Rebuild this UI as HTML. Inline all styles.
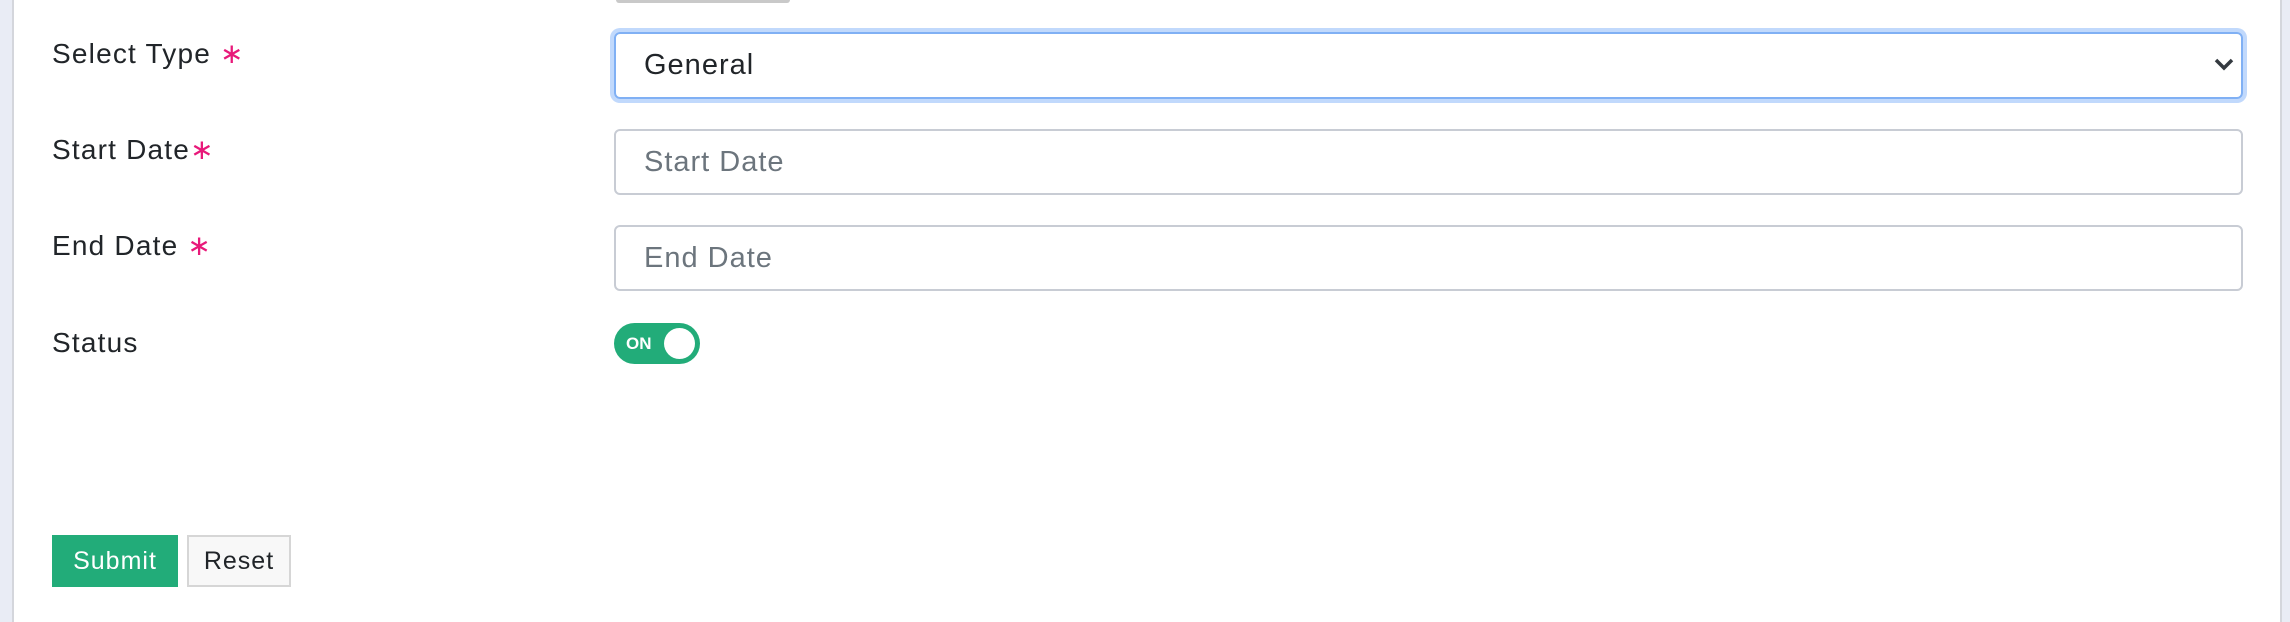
<!DOCTYPE html>
<html><head><meta charset="utf-8"><style>
*{box-sizing:border-box;margin:0;padding:0}
body{width:2290px;height:622px;background:#fff;position:relative;overflow:hidden;font-family:"Liberation Sans",sans-serif;color:#212529}
.lb{position:absolute;left:0;top:0;width:14px;height:622px;background:#e9ecf5;border-right:2px solid #d4d6dc}
.rb{position:absolute;right:0;top:0;width:10px;height:622px;background:#e9ecf5;border-left:2px solid #d4d6dc}
.lab{position:absolute;left:52px;font-size:28px;color:#212529;letter-spacing:1.2px}
.lab i{font-style:normal;color:#e8197a}
.box{position:absolute;left:614px;width:1629px;border:2px solid #c8ccd4;border-radius:6px;font-size:29px;padding-left:28px;letter-spacing:1px;display:flex;align-items:center;color:#6c757d}
.sel{top:32px;height:67px;border-color:#80b0f4;box-shadow:0 0 0 4px #c1d9fc;color:#212529}
.tog{position:absolute;left:614px;top:323px;width:86px;height:41px;border-radius:21px;background:#22ac79}
.tog span{position:absolute;left:12px;top:11px;color:#fff;font-weight:bold;font-size:17px}
.tog b{position:absolute;right:5px;top:5px;width:31px;height:31px;border-radius:50%;background:#fff}
.btn{position:absolute;top:535px;height:52px;font-size:25px;letter-spacing:1px;display:flex;align-items:center;justify-content:center}
</style></head><body>
<div class="lb"></div><div class="rb"></div>
<div style="position:absolute;left:616px;top:0;width:174px;height:3px;background:#c9c9c9;border-radius:0 0 3px 3px"></div>
<div class="lab" style="top:37px">Select Type <i>∗</i></div>
<div class="box sel">General
<svg style="position:absolute;right:6px;top:22px" width="22" height="16" viewBox="0 0 22 16"><path d="M3 4l8 8 8-8" fill="none" stroke="#343a40" stroke-width="3.5"/></svg></div>
<div class="lab" style="top:133px">Start Date<i>∗</i></div>
<div class="box" style="top:129px;height:66px">Start Date</div>
<div class="lab" style="top:229px">End Date <i>∗</i></div>
<div class="box" style="top:225px;height:66px">End Date</div>
<div class="lab" style="top:327px">Status</div>
<div class="tog"><span>ON</span><b></b></div>
<div class="btn" style="left:52px;width:126px;background:#22ac79;color:#fff">Submit</div>
<div class="btn" style="left:187px;width:104px;background:#f8f8f8;border:2px solid #d6d6d6;color:#212529">Reset</div>
</body></html>
